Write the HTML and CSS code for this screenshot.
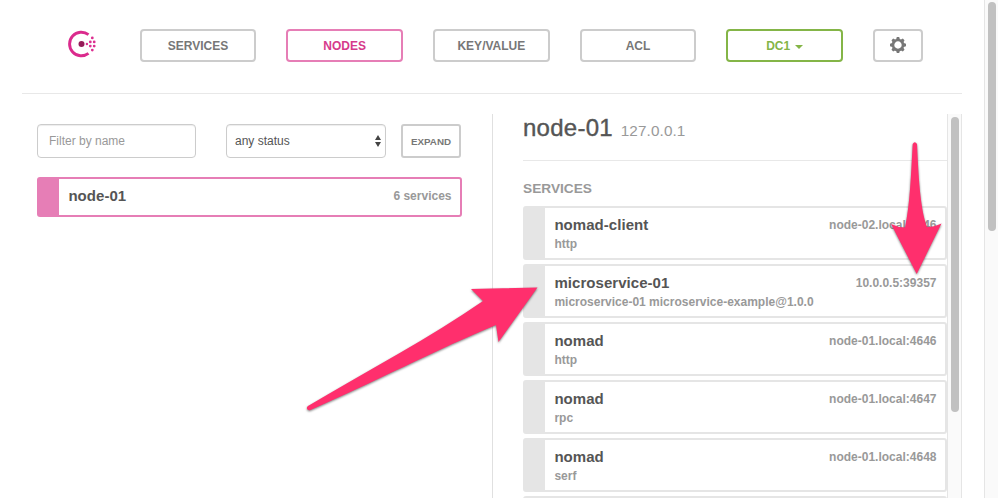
FILE: index.html
```html
<!DOCTYPE html>
<html lang="en">
<head>
<meta charset="utf-8">
<title>Consul</title>
<link rel="stylesheet" href="styles.css">
</head>
<body>
<div class="page">
  <header class="topbar">
    <svg class="logo" viewBox="0 0 28 28" width="28" height="28">
      <path d="M20.500 4.600 A11.800 11.800 0 1 0 20.500 23.400" fill="none" stroke="#db2b8d" stroke-width="2.900"/>
      <circle cx="13.500" cy="14" r="3" fill="#961d59"/>
      <g fill="#dc2f90">
        <circle cx="18.900" cy="14" r="1.200"/>
        <circle cx="22.300" cy="11.900" r="1.400"/><circle cx="22.300" cy="16.100" r="1.400"/>
        <circle cx="26.200" cy="11.900" r="1.400"/><circle cx="26.200" cy="16.100" r="1.400"/>
        <circle cx="24.300" cy="7.900" r="1.400"/><circle cx="24.300" cy="20.100" r="1.400"/>
      </g>
    </svg>
    <nav class="nav">
      <a class="btn">SERVICES</a>
      <a class="btn active">NODES</a>
      <a class="btn">KEY/VALUE</a>
      <a class="btn">ACL</a>
      <a class="btn dc">DC1<span class="caret"></span></a>
      <a class="btn gear">
        <svg viewBox="-8 -8 16 16" width="16" height="16">
          <circle r="5" fill="none" stroke="#777" stroke-width="2.600"/>
          <g fill="#777">
            <path id="tooth" d="M-1.900 -5.600 L-1.200 -8 H1.200 L1.900 -5.600Z"/>
            <use href="#tooth" transform="rotate(45)"/><use href="#tooth" transform="rotate(90)"/>
            <use href="#tooth" transform="rotate(135)"/><use href="#tooth" transform="rotate(180)"/>
            <use href="#tooth" transform="rotate(225)"/><use href="#tooth" transform="rotate(270)"/>
            <use href="#tooth" transform="rotate(315)"/>
          </g>
        </svg>
      </a>
    </nav>
  </header>
  <main class="columns">
    <section class="list">
      <div class="filters">
        <div class="field name">Filter by name</div>
        <div class="field status">any status
          <svg viewBox="0 0 6 12" width="6" height="12"><path d="M0 5 L3 0 L6 5Z M0 7 H6 L3 12Z" fill="#444"/></svg>
        </div>
        <div class="expand">EXPAND</div>
      </div>
      <div class="card node"><b class="title">node-01</b><span class="addr">6 services</span></div>
    </section>
    <section class="detail">
      <div class="content">
        <h1>node-01 <small>127.0.0.1</small></h1>
        <h5>SERVICES</h5>
        <div class="card"><div><b class="title">nomad-client</b><p>http</p></div><span class="addr">node-02.local:4646</span></div>
        <div class="card"><div><b class="title">microservice-01</b><p>microservice-01 microservice-example@1.0.0</p></div><span class="addr">10.0.0.5:39357</span></div>
        <div class="card"><div><b class="title">nomad</b><p>http</p></div><span class="addr">node-01.local:4646</span></div>
        <div class="card"><div><b class="title">nomad</b><p>rpc</p></div><span class="addr">node-01.local:4647</span></div>
        <div class="card"><div><b class="title">nomad</b><p>serf</p></div><span class="addr">node-01.local:4648</span></div>
        <div class="card"></div>
      </div>
      <div class="track inner"><div class="thumb"></div></div>
    </section>
  </main>
</div>
<div class="track outer"><div class="thumb"></div></div>
<svg class="arrows" viewBox="0 0 998 498" width="998" height="498">
  <path d="M537.500 287.500 L471 289 L483 301 C430 338 370 369 308 406 C305.500 408 307.500 411 310.500 410 C370 384 440 348 496 325 L498.500 342Z"/>
  <path d="M916.700 274 L891 224 Q898 227.500 905 227.500 C910 204 911 175 912.700 144 Q914.800 140.500 917 144 C918.500 175 920 208 927 227 Q934 227 941.500 223.500Z"/>
</svg>
</body>
</html>
```
FILE: styles.css
```css
* { box-sizing: border-box; }
body {
  margin: 0;
  height: 498px;
  overflow: hidden;
  display: flex;
  justify-content: space-between;
  background: #fff;
  color: #555;
  font: 12px/16px "Liberation Sans", Arial, sans-serif;
}
.page { width: 940px; margin-left: 22px; }
.topbar {
  height: 94px;
  padding: 29px 39px 0 46px;
  display: flex;
  justify-content: space-between;
  border-bottom: 1px solid #e8e8e8;
}
.logo { margin-top: 1px; }
.nav { display: flex; gap: 30px; width: 783.33px; }
.btn {
  flex: 1;
  height: 33px;
  display: flex;
  align-items: center;
  justify-content: center;
  border: 2px solid #ccc;
  border-radius: 4px;
  color: #777;
  font-weight: bold;
}
.active { border-color: #e67eb6; color: #d63a8b; }
.dc { border-color: #84b547; color: #84b547; }
.gear { flex: 0 0 50px; }
.gear svg { margin-top: -1px; }
.caret {
  margin: 2px 0 0 5px;
  border: 4px solid transparent;
  border-top-color: currentColor;
  border-bottom: 0;
}
.columns { display: flex; margin-top: 20px; height: 384px; }
.list { width: 471px; padding: 10px 30px 0 15px; border-right: 1px solid #e0e0e0; }
.filters { display: flex; margin-bottom: 19px; }
.field {
  height: 34px;
  display: flex;
  align-items: center;
  border: 1px solid #ccc;
  border-radius: 4px;
  box-shadow: inset 0 1px 1px rgba(0, 0, 0, .075);
}
.name { width: 159px; margin-right: 30px; padding-left: 11px; color: #999; }
.status { width: 160px; margin-right: 15px; padding: 0 4px 0 8px; justify-content: space-between; }
.expand {
  width: 60px;
  height: 34px;
  border: 2px solid #ccc;
  border-radius: 3px;
  color: #777;
  text-align: center;
  font: bold 9.8px/31px "Liberation Sans", Arial, sans-serif;
}
.card {
  height: 54px;
  margin-bottom: 4px;
  padding: 9px 8.5px 0 9.4px;
  display: flex;
  justify-content: space-between;
  border: 2px solid #e5e5e5;
  border-left-width: 22px;
  border-radius: 3px;
}
.node { width: 425px; height: 40px; border-color: #e67eb6; }
.title { font-size: 15px; line-height: 16px; letter-spacing: .05px; }
.card p { margin: 2px 0 0; font-weight: bold; line-height: 16px; color: #999; }
.addr { color: #999; font-weight: bold; }
.detail { display: flex; flex: 1; padding-left: 30px; }
.content { flex: 1; overflow: hidden; }
h1 {
  height: 47px;
  margin: 0 0 20px;
  border-bottom: 1px solid #e8e8e8;
  font-size: 24px;
  font-weight: normal;
  line-height: 28px;
  letter-spacing: .25px;
  -webkit-text-stroke: .4px #555;
}
small { margin-left: 1px; font-size: 15.3px; color: #999; letter-spacing: .1px; -webkit-text-stroke: 0; }
h5 { margin: 0; height: 25px; font-size: 13.7px; line-height: 16px; color: #999; }
.track { background: #fafafa; border-left: 1px solid #e5e5e5; }
.thumb { width: 8px; border-radius: 4px; background: #c1c1c1; }
.inner { width: 15px; padding: 3px 0 0 3px; border-right: 1px solid #e5e5e5; }
.inner .thumb { height: 295px; }
.outer { width: 14px; padding: 2px 0 0 3px; }
.outer .thumb { height: 229px; }
.arrows {
  position: absolute;
  inset: 0;
  fill: #ff2f6d;
  filter: drop-shadow(0 1px 1px rgba(0, 0, 0, .5));
}
```
